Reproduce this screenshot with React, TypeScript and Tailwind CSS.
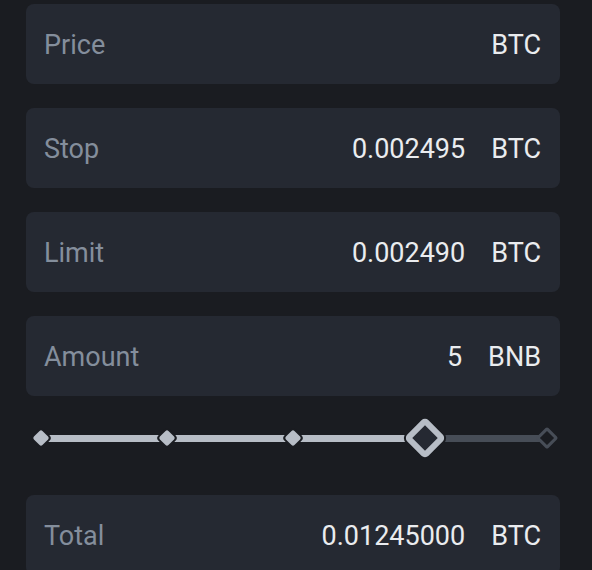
const fields = [
  { label: "Price", value: "", unit: "BTC" },
  { label: "Stop", value: "0.002495", unit: "BTC" },
  { label: "Limit", value: "0.002490", unit: "BTC" },
  { label: "Amount", value: "5", unit: "BNB" },
];

function Field({ label, value, unit }: { label: string; value: string; unit: string }) {
  return (
    <div className="flex h-[80px] items-center rounded-[8px] bg-[#252932] pl-[18px] pr-[19px] pt-[2px] text-[27px]">
      <span className="text-[#848e9c]">{label}</span>
      <span className="ml-auto text-[#eaecef]">{value}</span>
      <span className="ml-[26px] text-[#eaecef]">{unit}</span>
    </div>
  );
}

// each mark sits in a zero-width slot so the track segments set the spacing
function Mark({ kind }: { kind: "dot" | "thumb" | "end" }) {
  return (
    <div className="z-10 flex w-0 items-center justify-center">
      {kind === "dot" && (
        <div className="h-[12px] w-[12px] shrink-0 rotate-45 rounded-[2px] bg-[#b7bdc6] ring-[2px] ring-[#1a1c21]" />
      )}
      {kind === "thumb" && (
        <div className="h-[30px] w-[30px] shrink-0 rotate-45 rounded-[5px] border-[6px] border-[#b7bdc6] bg-[#252932] ring-[2px] ring-[#1a1c21]" />
      )}
      {kind === "end" && (
        <div className="h-[16px] w-[16px] shrink-0 rotate-45 rounded-[2px] border-[3px] border-[#474d57] bg-[#1a1c21]" />
      )}
    </div>
  );
}

function Slider() {
  return (
    <div className="flex h-[40px] items-center pl-[14.5px]">
      <Mark kind="dot" />
      <div className="h-[7px] w-[126px] bg-[#b7bdc6]" />
      <Mark kind="dot" />
      <div className="h-[7px] w-[126px] bg-[#b7bdc6]" />
      <Mark kind="dot" />
      <div className="h-[7px] w-[132px] bg-[#b7bdc6]" />
      <Mark kind="thumb" />
      <div className="h-[7px] w-[122px] bg-[#474d57]" />
      <Mark kind="end" />
    </div>
  );
}

export default function App() {
  return (
    <div
      className="h-[570px] w-[592px] overflow-hidden bg-[#1a1c21] pl-[26px] pr-[32px] pt-[4px]"
      style={{ fontFamily: "Roboto, 'Noto Sans', sans-serif" }}
    >
      <div className="flex flex-col gap-[24px]">
        {fields.map((f) => (
          <Field key={f.label} {...f} />
        ))}
      </div>
      <div className="mt-[22px]">
        <Slider />
      </div>
      <div className="mt-[37px]">
        <Field label="Total" value="0.01245000" unit="BTC" />
      </div>
    </div>
  );
}
